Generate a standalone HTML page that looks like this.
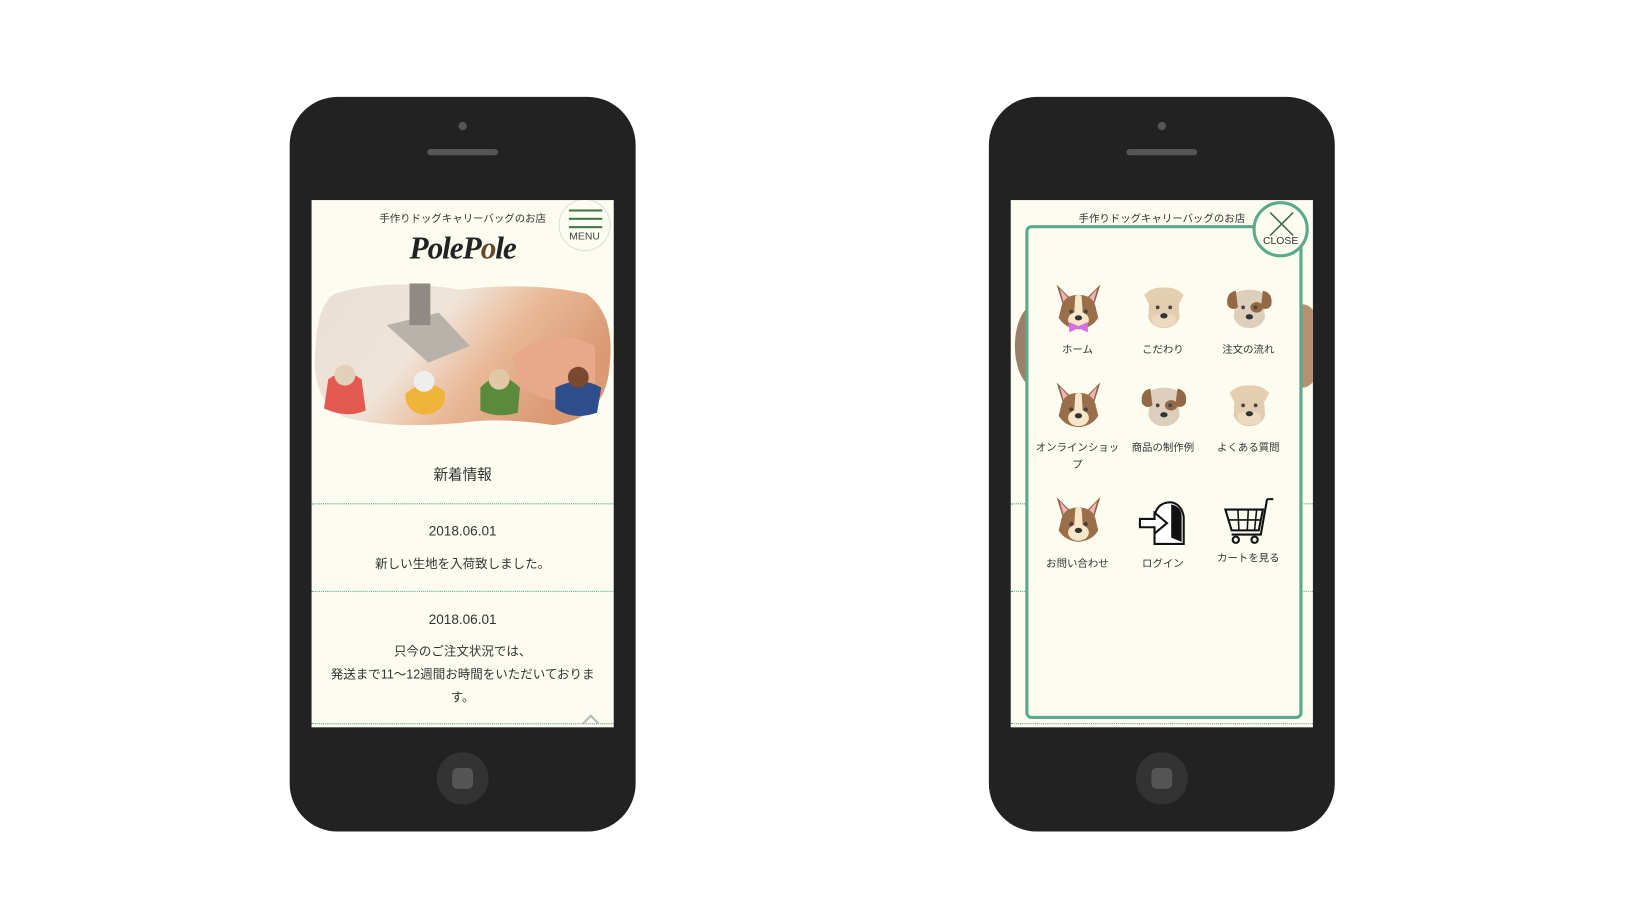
<!DOCTYPE html>
<html><head><meta charset="utf-8"><style>
html,body{margin:0;padding:0;background:#fff;width:1634px;height:919px;overflow:hidden}
#wrap{position:absolute;left:0;top:0;width:1568px;height:882px;transform:scale(1.042);transform-origin:0 0;font-family:"Liberation Sans","Noto Sans CJK JP",sans-serif;color:#333}
.phone{position:absolute;top:93px;width:332px;height:705px;background:#222;border-radius:46px}
.dot{position:absolute;left:162px;top:24px;width:8px;height:8px;border-radius:50%;background:#555}
.spk{position:absolute;left:132px;top:50px;width:68px;height:6px;border-radius:3px;background:#555}
.home{position:absolute;left:141px;top:629px;width:50px;height:50px;border-radius:50%;background:#333}
.home i{position:absolute;left:15px;top:15px;width:20px;height:20px;border-radius:5px;background:#555}
.screen{position:absolute;left:21px;top:99px;width:290px;height:506px;background:#fdfcf1;overflow:hidden}
.t{position:absolute;left:0;width:290px;text-align:center;white-space:nowrap}
.hl{position:absolute;left:0;width:290px;border-top:1.5px dotted #4aa58a}
.menu{position:absolute;left:237px;top:-1px;width:50px;height:50px;border-radius:50%;background:#fdfcf1;border:1px solid #ddd;box-sizing:border-box}
.menu b{position:absolute;left:9px;width:32px;height:2px;background:#3f7a4a}
.logo{font-family:"Liberation Serif","DejaVu Serif",serif;font-style:italic;font-size:30px;font-weight:bold;color:#222;letter-spacing:-1px}
.lab{position:absolute;width:90px;text-align:center;font-size:10px;color:#333;line-height:16px}
.ic{position:absolute;width:54px;height:54px}
</style></head><body><div id="wrap">
<svg width="0" height="0" style="position:absolute"><defs>
<symbol id="chi" viewBox="0 0 54 54">
<path d="M6 4 L20 18 L14 30Z" fill="#8c6440"/><path d="M48 4 L34 18 L40 30Z" fill="#8c6440"/>
<path d="M9 8 L19 19 L14 26Z" fill="#f2b3b8"/><path d="M45 8 L35 19 L40 26Z" fill="#f2b3b8"/>
<path d="M10 28 Q12 14 27 14 Q42 14 44 28 L46 36 Q40 46 27 47 Q14 46 8 36Z" fill="#9a6e48"/>
<path d="M24 15 Q27 13 30 15 L31 30 Q27 34 23 30Z" fill="#f8e6c8"/>
<ellipse cx="27" cy="38" rx="10" ry="8" fill="#f8e6c8"/>
<circle cx="20" cy="30" r="2" fill="#444"/><circle cx="34" cy="30" r="2" fill="#444"/>
<ellipse cx="27" cy="36" rx="3.5" ry="2.5" fill="#333"/></symbol>
<symbol id="ter" viewBox="0 0 54 54">
<path d="M8 14 Q16 6 27 7 Q38 6 46 14 L42 22 L12 22Z" fill="#e6cfb0"/>
<path d="M13 16 Q27 10 41 16 L42 36 Q38 46 27 46 Q16 46 12 36Z" fill="#e2cdb1"/>
<path d="M16 34 Q27 30 38 34 L38 42 Q27 48 16 42Z" fill="#ecd9c0"/>
<circle cx="21" cy="26" r="1.8" fill="#444"/><circle cx="33" cy="26" r="1.8" fill="#444"/>
<ellipse cx="27" cy="34" rx="3.5" ry="2.5" fill="#333"/></symbol>
<symbol id="spt" viewBox="0 0 54 54">
<path d="M14 12 Q27 6 40 12 L42 36 Q38 46 27 46 Q16 46 12 36Z" fill="#ddcfbb"/>
<path d="M14 10 Q4 12 6 24 Q10 30 16 26Z" fill="#936845"/><path d="M40 10 Q50 12 48 24 Q44 30 38 26Z" fill="#936845"/>
<ellipse cx="34" cy="26" rx="6" ry="5" fill="#936845"/>
<circle cx="21" cy="26" r="1.8" fill="#444"/><circle cx="33" cy="26" r="1.8" fill="#444"/>
<ellipse cx="27" cy="35" rx="3.5" ry="2.5" fill="#333"/></symbol>
</defs></svg>

<!-- Phone 1 -->
<div class="phone" style="left:278px">
<div class="dot"></div><div class="spk"></div><div class="home"><i></i></div>
<div class="screen">
<div class="t" style="top:9px;font-size:10px">手作りドッグキャリーバッグのお店</div>
<div class="menu"><b style="top:9px"></b><b style="top:17px"></b><b style="top:25px"></b><div style="position:absolute;top:30px;width:48px;text-align:center;font-size:10px;color:#444">MENU</div></div>
<div class="t logo" style="top:30px">Pole<span style="color:#222">P</span><span style="color:#6b4a2a">o</span>le</div>
<svg style="position:absolute;left:2px;top:80px" width="286" height="138" viewBox="0 0 286 138">
<defs><linearGradient id="g1" x1="0" y1="0" x2="1" y2="0.4"><stop offset="0" stop-color="#e9dfd4"/><stop offset="0.45" stop-color="#efe4d8"/><stop offset="0.7" stop-color="#e9b896"/><stop offset="1" stop-color="#d99a74"/></linearGradient></defs>
<path d="M20 10 Q70 -6 140 6 Q210 -2 262 10 Q290 30 284 80 Q280 130 230 136 Q180 128 140 134 Q70 140 28 128 Q-4 110 2 60 Q4 20 20 10Z" fill="url(#g1)"/>
<path d="M70 40 L120 28 L150 60 L110 76Z" fill="#b8b2aa"/><rect x="92" y="0" width="20" height="40" fill="#8f8a84"/>
<path d="M190 70 Q230 40 270 60 L270 110 Q230 120 200 100Z" fill="#e8a98a"/>
<path d="M14 92 Q30 80 46 92 L50 122 Q32 130 10 120Z" fill="#e45a50"/><circle cx="30" cy="88" r="10" fill="#e3d0b8"/>
<path d="M88 106 Q108 88 126 104 Q128 124 106 126 Q88 124 88 106Z" fill="#f0b43a"/><circle cx="106" cy="94" r="10" fill="#eee"/>
<path d="M160 100 Q178 80 198 100 L196 124 Q176 130 160 122Z" fill="#5c8a3c"/><circle cx="178" cy="92" r="10" fill="#e2c9a6"/>
<path d="M232 100 Q256 88 276 100 L272 124 Q250 132 232 120Z" fill="#2e4d8a"/><circle cx="254" cy="90" r="10" fill="#7a4a30"/>
</svg>
<div class="t" style="top:253px;font-size:14px">新着情報</div>
<div class="hl" style="top:291px"></div>
<div class="t" style="top:310px;font-size:13px">2018.06.01</div>
<div class="t" style="top:340px;font-size:12px">新しい生地を入荷致しました。</div>
<div class="hl" style="top:375px"></div>
<div class="t" style="top:395px;font-size:13px">2018.06.01</div>
<div class="t" style="top:424px;font-size:12px">只今のご注文状況では、</div>
<div class="t" style="top:446px;font-size:12px">発送まで11〜12週間お時間をいただいておりま</div>
<div class="t" style="top:468px;font-size:12px">す。</div>
<div class="hl" style="top:502px"></div>
<div style="position:absolute;left:262px;top:496px;width:10px;height:10px;border-left:2px solid #bbb;border-top:2px solid #bbb;transform:rotate(45deg)"></div>
</div></div>

<!-- Phone 2 -->
<div class="phone" style="left:949px">
<div class="dot"></div><div class="spk"></div><div class="home"><i></i></div>
<div class="screen">
<div class="t" style="top:9px;font-size:10px">手作りドッグキャリーバッグのお店</div>
<div style="position:absolute;left:4px;top:100px;width:40px;height:80px;border-radius:50%;background:#9a8068"></div>
<div style="position:absolute;left:260px;top:100px;width:40px;height:80px;border-radius:50%;background:#b89070"></div>
<div class="hl" style="top:291px"></div><div class="hl" style="top:375px"></div><div class="hl" style="top:502px"></div>
<div style="position:absolute;left:14px;top:24px;width:266px;height:474px;box-sizing:border-box;border:3px solid #5aa98a;border-radius:6px;background:#fdfcf1"></div>
<div style="position:absolute;left:232px;top:1px;width:54px;height:54px;box-sizing:border-box;border-radius:50%;border:3px solid #5aa98a;background:#fdfcf1">
<svg style="position:absolute;left:12px;top:6px" width="26" height="26"><path d="M2 2L24 24M24 2L2 24" stroke="#3f6a46" stroke-width="1.5"/></svg>
<div style="position:absolute;left:0;top:30px;width:48px;text-align:center;font-size:10px;color:#333">CLOSE</div></div>
<svg class="ic" style="left:38px;top:77px"><use href="#chi"/><path d="M18 46 L27 50 L36 46 L36 56 L27 52 L18 56Z" fill="#d86fe0" transform="translate(0,-6)"/></svg>
<svg class="ic" style="left:120px;top:77px"><use href="#ter"/></svg>
<svg class="ic" style="left:202px;top:77px"><use href="#spt"/></svg>
<div class="lab" style="left:19px;top:137px">ホーム</div>
<div class="lab" style="left:101px;top:137px">こだわり</div>
<div class="lab" style="left:183px;top:137px">注文の流れ</div>
<svg class="ic" style="left:38px;top:171px"><use href="#chi"/></svg>
<svg class="ic" style="left:120px;top:171px"><use href="#spt"/></svg>
<svg class="ic" style="left:202px;top:171px"><use href="#ter"/></svg>
<div class="lab" style="left:19px;top:231px">オンラインショッ<br>プ</div>
<div class="lab" style="left:101px;top:231px">商品の制作例</div>
<div class="lab" style="left:183px;top:231px">よくある質問</div>
<svg class="ic" style="left:38px;top:281px"><use href="#chi"/></svg>
<svg class="ic" style="left:120px;top:284px" viewBox="0 0 54 54"><path d="M18 46 L18 20 Q20 6 34 6 Q44 8 46 20 L46 46Z" fill="#fff" stroke="#111" stroke-width="2"/><path d="M34 8 Q44 10 44 20 L44 44 L34 40Z" fill="#111"/><path d="M4 22 L18 22 L18 16 L30 26 L18 36 L18 30 L4 30Z" fill="#fff" stroke="#111" stroke-width="2"/></svg>
<svg class="ic" style="left:202px;top:281px" viewBox="0 0 54 54"><path d="M4 16 L40 16 L36 36 L10 36Z M44 6 L50 6 M44 6 L38 40 L10 40" fill="none" stroke="#111" stroke-width="2"/><path d="M16 16 L17 36 M26 16 L25 36 M34 16 L32 36 M6 26 L38 26" stroke="#111" stroke-width="1.5"/><circle cx="14" cy="45" r="3" fill="none" stroke="#111" stroke-width="2"/><circle cx="32" cy="45" r="3" fill="none" stroke="#111" stroke-width="2"/></svg>
<div class="lab" style="left:19px;top:342px">お問い合わせ</div>
<div class="lab" style="left:101px;top:342px">ログイン</div>
<div class="lab" style="left:183px;top:337px">カートを見る</div>
</div></div>
</div></body></html>
